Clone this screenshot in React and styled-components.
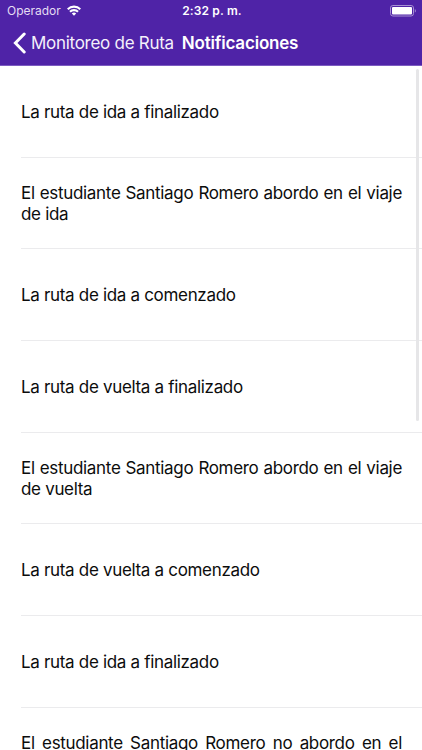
import styled, {createGlobalStyle} from 'styled-components'


const GlobalStyle = createGlobalStyle`
  * {
    box-sizing: border-box;
  }

  body {
    margin: 0;
    background-color: white;
    font-family: Inter, "Liberation Sans", sans-serif;
    overflow: hidden;
  }
`

const Screen = styled.div`
  position: relative;
  display: flex;
  flex-direction: column;
  width: 100%;
  height: 100vh;
  overflow: hidden;
`

const Header = styled.header`
  flex: none;
  height: 66px;
  background-color: #4f23a7;
  border-bottom: 1px solid #7c5bc0;
  color: white;
`

const StatusBar = styled.div`
  display: grid;
  grid-template-columns: 1fr auto 1fr;
  align-items: center;
  height: 21px;
  padding: 0 5px 0 7px;
  font-size: 12px;
`

const Carrier = styled.div`
  display: flex;
  align-items: center;
  gap: 6px;
  color: #e4dcf3;
  letter-spacing: 0;
`

const Clock = styled.div`
  font-weight: 600;
  letter-spacing: 0.15px;
`

const BatteryWrapper = styled.div`
  display: flex;
  justify-content: flex-end;
`

const NavBar = styled.nav`
  display: flex;
  align-items: center;
  height: 44px;
  padding-left: 13px;
  font-size: 17px;
  white-space: nowrap;
`

const BackButton = styled.button`
  display: flex;
  align-items: center;
  gap: 5px;
  padding: 0;
  border: none;
  background: none;
  color: #f4f0fb;
  font: inherit;
  letter-spacing: -0.28px;
`

const Title = styled.h1`
  margin: 0 0 0 8px;
  font-size: 17px;
  font-weight: 600;
  letter-spacing: -0.2px;
`

const List = styled.ul`
  margin: 0;
  padding: 0 0 0 21px;
  list-style: none;
`

const Item = styled.li`
  display: flex;
  align-items: center;
  height: 91.67px;
  padding-top: 1.4px;
  padding-right: 20px;
  border-bottom: 1px solid #ebebed;

  & > p {
    width: 100%;
    margin: 0;
    color: #0c0c0c;
    font-size: 17px;
    line-height: 20.2px;
    letter-spacing: -0.32px;
    text-align: justify;
  }
`

const ScrollBar = styled.div`
  position: absolute;
  top: 69px;
  right: 3px;
  width: 3px;
  height: 352px;
  border-radius: 2px;
  background-color: #e6e6e8;
`

const notificaciones = [
    'La ruta de ida a finalizado',
    'El estudiante Santiago Romero abordo en el viaje de ida',
    'La ruta de ida a comenzado',
    'La ruta de vuelta a finalizado',
    'El estudiante Santiago Romero abordo en el viaje de vuelta',
    'La ruta de vuelta a comenzado',
    'La ruta de ida a finalizado',
    'El estudiante Santiago Romero no abordo en el viaje de ida',
]

const WifiIcon = () => (
    <svg width="14" height="11" viewBox="0 0 14 11" fill="none" stroke="white" strokeWidth="2.1">
        <path d="M.7 4.2a8.9 8.9 0 0 1 12.6 0"/>
        <path d="M3 6.8a5.6 5.6 0 0 1 8 0"/>
        <path d="M7 10.8 4.8 8.6a3.1 3.1 0 0 1 4.4 0z" fill="white" stroke="none"/>
    </svg>
)

const BatteryIcon = () => (
    <svg width="27" height="12" viewBox="0 0 27 12">
        <rect x="0.5" y="0.5" width="23" height="10.5" rx="2.4" fill="none" stroke="#a891d3"/>
        <rect x="2" y="2" width="20" height="7.5" rx="1" fill="white"/>
        <path d="M24.8 4v3.6c1.4-.5 1.4-3.1 0-3.6z" fill="#a891d3"/>
    </svg>
)

const BackIcon = () => (
    <svg width="13" height="22" viewBox="0 0 13 22" fill="none" stroke="white" strokeWidth="3" strokeLinecap="round">
        <path d="M11.2 2 2.4 11l8.8 9"/>
    </svg>
)

const App = () => {
    return (
        <Screen>
            <GlobalStyle/>
            <Header>
                <StatusBar>
                    <Carrier>
                        <span>Operador</span>
                        <WifiIcon/>
                    </Carrier>
                    <Clock>2:32 p. m.</Clock>
                    <BatteryWrapper>
                        <BatteryIcon/>
                    </BatteryWrapper>
                </StatusBar>
                <NavBar>
                    <BackButton>
                        <BackIcon/>
                        <span>Monitoreo de Ruta</span>
                    </BackButton>
                    <Title>Notificaciones</Title>
                </NavBar>
            </Header>

            <List>
                {notificaciones.map((texto, i) => (
                    <Item key={i}>
                        <p>{texto}</p>
                    </Item>
                ))}
            </List>
            <ScrollBar/>
        </Screen>
    )
}


export default App;
